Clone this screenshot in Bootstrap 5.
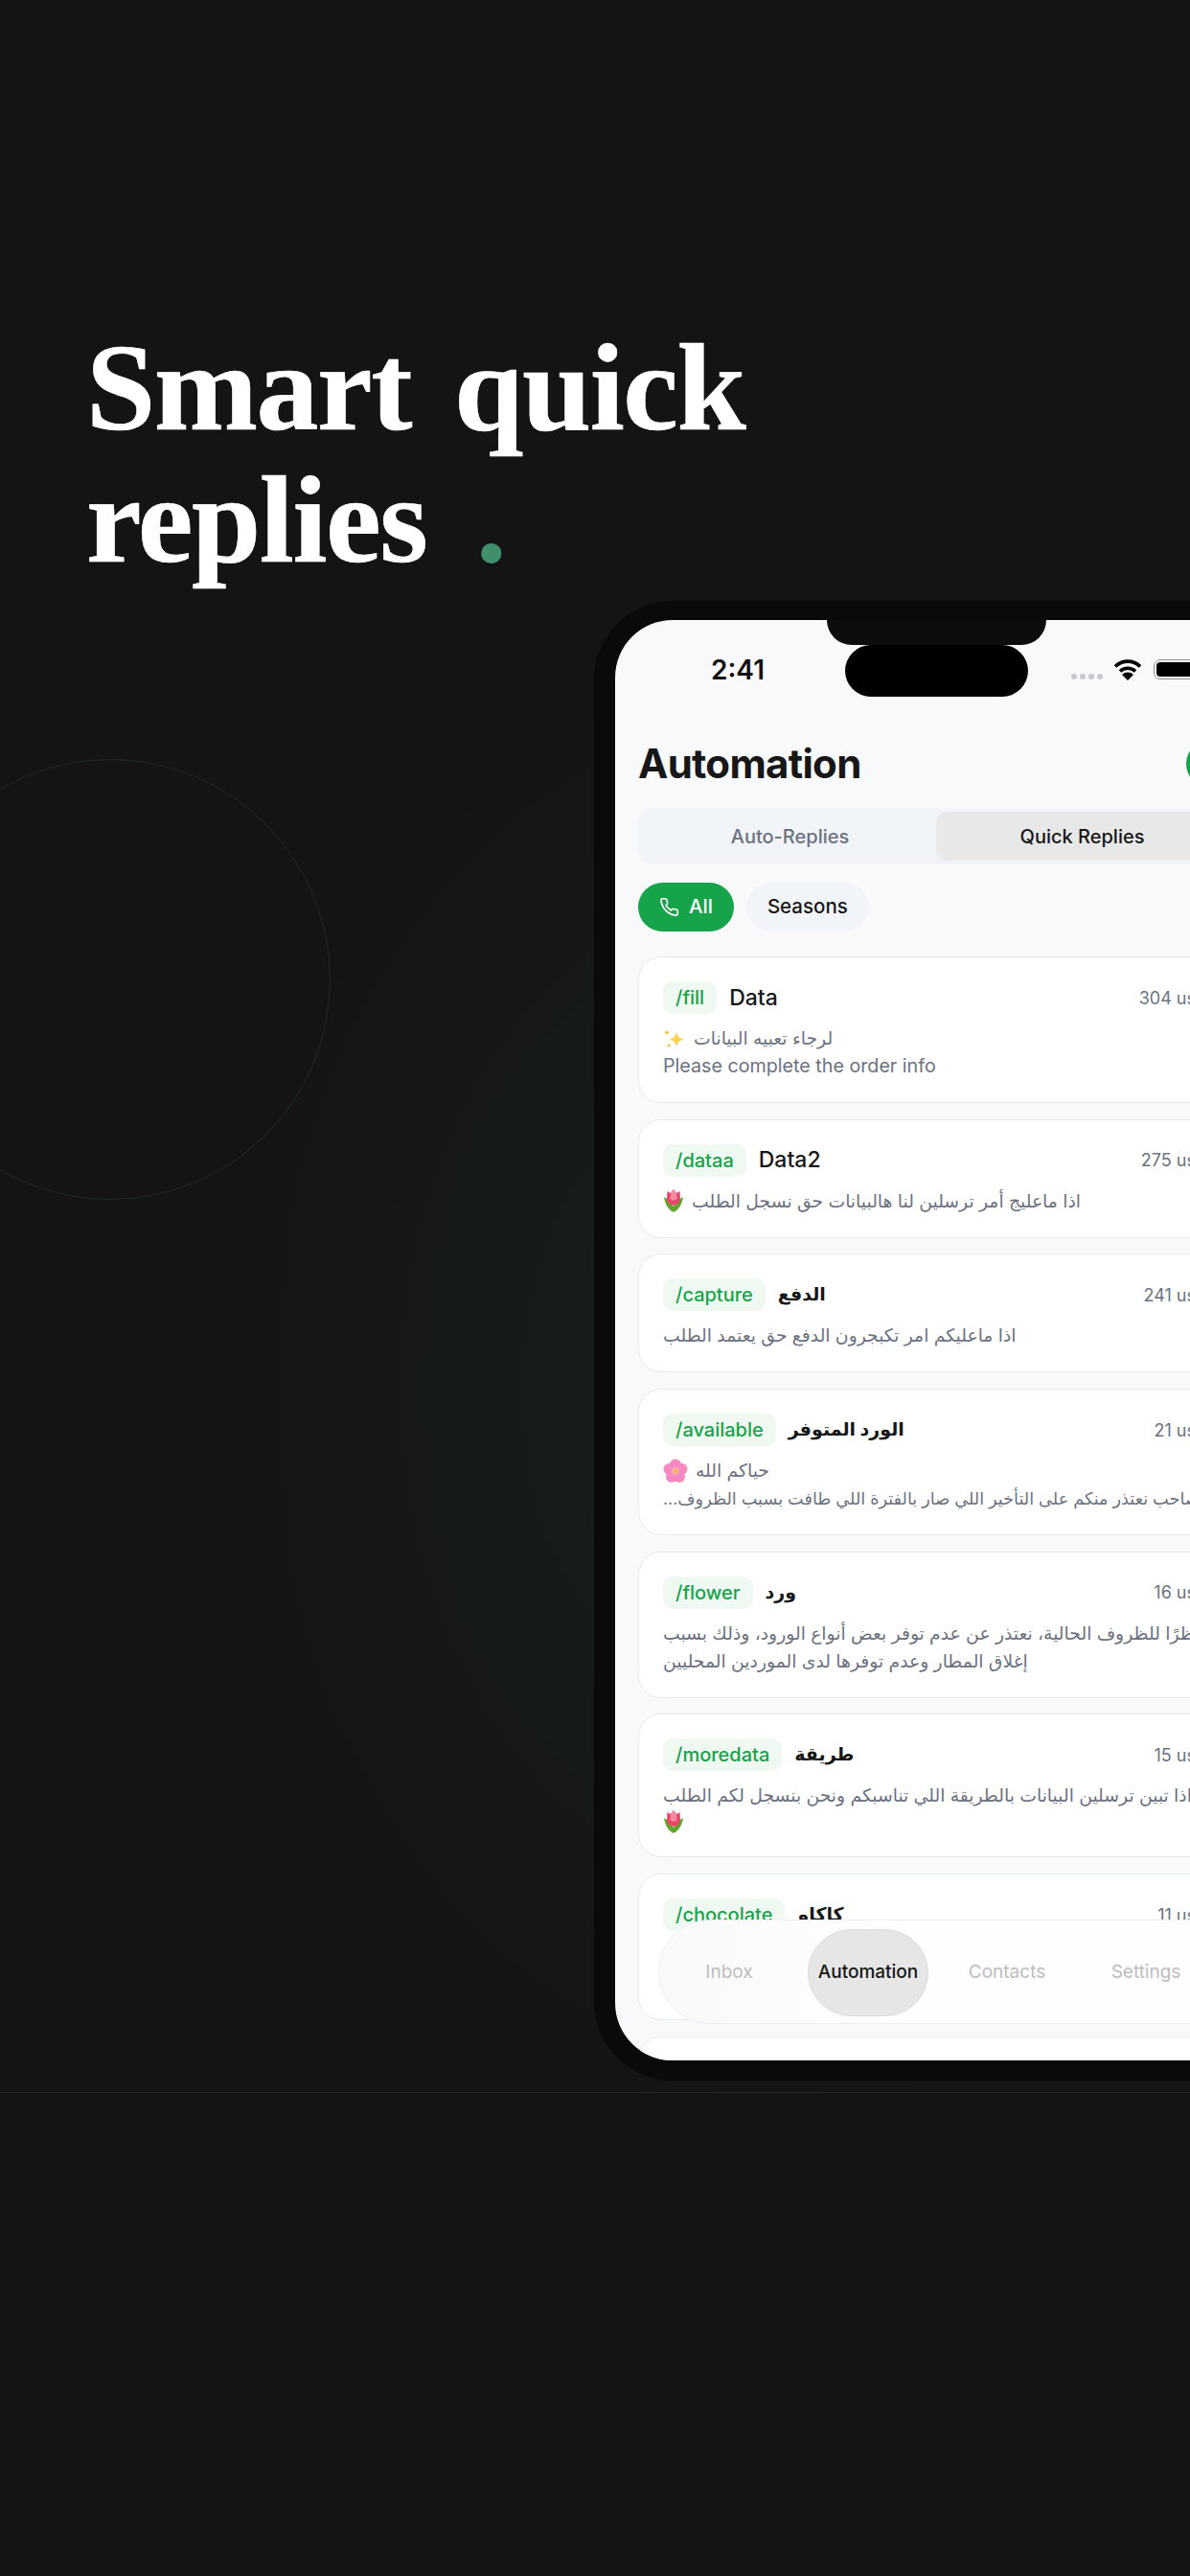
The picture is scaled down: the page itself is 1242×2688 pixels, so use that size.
<!DOCTYPE html>
<html lang="en">
<head>
<meta charset="UTF-8">
<title>Smart quick replies</title>
<link href="https://cdn.jsdelivr.net/npm/bootstrap@5.3.0/dist/css/bootstrap.min.css" rel="stylesheet">
<style>
    html, body { height: 2688px; }
    body {
        overflow: hidden;
        position: relative;
        font-family: "Inter", "DejaVu Sans", sans-serif;
        background-color: #141414;
        background-image: radial-gradient(ellipse 560px 760px at 800px 1450px, rgba(32, 72, 52, .27), rgba(32, 72, 52, 0));
    }
    .ring {
        position: absolute;
        left: -115px; top: 792px;
        width: 460px; height: 460px;
        border: 1.5px solid #1e2a26;
        border-radius: 50%;
    }
    .hero-title {
        margin: 0;
        padding: 335px 0 0 90px;
        font-family: "Liberation Serif", serif;
        font-weight: 700;
        font-size: 130px;
        line-height: 138px;
        letter-spacing: -1.5px;
        word-spacing: 14px;
        color: #fff;
        -webkit-text-stroke: .6px #fff;
    }
    .hero-dot { margin-left: 6px; color: #3f8f6b; -webkit-text-stroke: 0; }
    .phone {
        position: relative;
        margin: 16px 0 0 620px;
        width: 715px;
        height: 1544px;
        padding: 20px 22px 21px;
        background: #0a0a0a;
        border-radius: 82px;
    }
    .notch {
        position: absolute;
        left: 243px; top: 20px;
        width: 229px; height: 26px;
        background: #0d0d0d;
        border-radius: 0 0 26px 26px;
    }
    .island {
        position: absolute;
        left: 262px; top: 46px;
        width: 191px; height: 54px;
        background: #000;
        border-radius: 27px;
    }
    .screen {
        position: relative;
        height: 100%;
        overflow: hidden;
        padding: 36px 25px 0 24px;
        background: #f8f9fb;
        border-radius: 60px;
    }
    .status-row { height: 32px; }
    .clock {
        margin-left: 76px;
        font-size: 28px;
        line-height: 32px;
        font-weight: 600;
        color: #111;
    }
    .status-icons { position: absolute; left: 476px; top: 40px; }
    .sig-dot { width: 6px; height: 6px; margin-right: 3px; background: #c9cacd; border-radius: 50%; }
    .battery {
        width: 70px; height: 21px;
        padding: 2px;
        margin-left: 12px;
        border: 1.5px solid #8e8e8e;
        border-radius: 7px;
    }
    .battery-fill { height: 100%; background: #000; border-radius: 4px; }
    .head-row { height: 50px; margin-top: 57px; }
    .head-title { margin: 0; font-size: 42px; line-height: 50px; font-weight: 700; color: #171717; letter-spacing: -.7px; }
    .head-btn { width: 50px; height: 50px; background: #16a34a; border-radius: 50%; }
    .segment {
        height: 59px;
        margin-top: 21px;
        padding: 4px 6px;
        background: #f1f4f8;
        border-radius: 16px;
    }
    .seg-item {
        flex: 1;
        font-size: 20px;
        font-weight: 500;
        color: #6b7280;
        border-radius: 12px;
    }
    .seg-item.on { background: #e8e8e8; color: #171717; }
    .chips { margin-top: 19px; gap: 13px; }
    .chip {
        height: 51px;
        padding: 0 22px;
        font-size: 20.5px;
        font-weight: 500;
        color: #171717;
        background: #f1f4f8;
        border-radius: 26px;
    }
    .chip.on { gap: 10px; color: #fff; background: #16a34a; }
    .reply-list { margin-top: 26px; gap: 16.7px; }
    .reply-card {
        --bs-card-border-color: #e8eaee;
        --bs-card-border-radius: 24px;
        --bs-card-inner-border-radius: 23px;
        flex: none;
        padding: 25px 19px 23px 25px;
    }
    .reply-top { height: 34px; margin-bottom: 11px; }
    .reply-tag {
        height: 34px;
        padding: 0 13px;
        margin-right: 13px;
        font-size: 20px;
        font-weight: 500;
        line-height: 34px;
        color: #16a34a;
        background: #f0f8f2;
        border-radius: 10px;
    }
    .reply-name { font-size: 23px; font-weight: 500; color: #171717; }
    .reply-name[dir] { font-size: 19px; font-weight: 700; }
    .reply-uses { margin-left: auto; font-size: 18px; color: #6b7280; }
    .reply-text {
        font-size: 19.7px;
        line-height: 29px;
        color: #6b7280;
    }
    .ar { font-size: 18.8px; }
    .ar-line { display: block; direction: rtl; text-align: left; }
    .ar-clip { font-size: 17.7px; white-space: nowrap; margin-right: -16px; }
    .emoji { flex: none; }
    .bottom-nav {
        position: absolute;
        left: 45px; top: 1356px;
        width: 640px; height: 109px;
        padding: 2px 10px 0;
        gap: 19px;
        background: linear-gradient(100deg, #f8f9f8, #fefefe 40%);
        border: 1.5px solid #eeeff1;
        border-radius: 55px;
    }
    .nav-cell {
        flex: none;
        width: 126px; height: 91px;
        font-size: 19px;
        color: #bdbdbd;
        border-radius: 46px;
    }
    .nav-cell.on { font-weight: 500; color: #171717; background: #e6e6e6; border: 1px solid #dcdcdc; }
    .foot-line { height: 1px; margin-top: 12px; background: #262626; }
</style>
</head>
<body>
    <div class="ring"></div>

    <h1 class="hero-title">Smart quick<br>replies <span class="hero-dot">.</span></h1>

    <div class="phone">
        <div class="screen">
            <div class="status-row"><div class="clock">2:41</div></div>

            <div class="head-row d-flex justify-content-between align-items-center">
                <h2 class="head-title">Automation</h2>
                <div class="head-btn"></div>
            </div>

            <div class="segment d-flex">
                <div class="seg-item d-flex align-items-center justify-content-center">Auto-Replies</div>
                <div class="seg-item on d-flex align-items-center justify-content-center">Quick Replies</div>
            </div>

            <div class="chips d-flex">
                <div class="chip on d-flex align-items-center">
                    <svg width="21" height="21" viewBox="0 0 24 24" fill="none" stroke="#fff" stroke-width="1.9" stroke-linecap="round" stroke-linejoin="round"><path d="M22 16.9v3a2 2 0 0 1-2.2 2 19.8 19.8 0 0 1-8.6-3.1 19.5 19.5 0 0 1-6-6A19.8 19.8 0 0 1 2.1 4.2 2 2 0 0 1 4.1 2h3a2 2 0 0 1 2 1.7c.1 1 .4 1.9.7 2.8a2 2 0 0 1-.5 2.1L8.1 9.9a16 16 0 0 0 6 6l1.3-1.3a2 2 0 0 1 2.1-.4c.9.3 1.8.6 2.8.7a2 2 0 0 1 1.7 2z"/></svg>
                    All
                </div>
                <div class="chip d-flex align-items-center">Seasons</div>
            </div>

            <div class="reply-list d-flex flex-column">
                <div class="card reply-card">
                    <div class="reply-top d-flex align-items-center">
                        <span class="reply-tag">/fill</span><span class="reply-name">Data</span><span class="reply-uses">304 uses</span>
                    </div>
                    <div class="reply-text">
                        <div class="d-flex align-items-center gap-2">
                            <svg class="emoji" width="24" height="24" viewBox="0 0 24 24" fill="#fcd34d"><path d="M14 4c1 6 3 7.500 8 8.500-5 1-7 3-8 8.500-1-5.500-3-7.500-8-8.500 5-1 7-2.500 8-8.500z"/><path fill="#f5b83d" d="M4 2c.4 2.300 1 3 3 3.500-2 .5-2.600 1.200-3 3.500-.4-2.300-1-3-3-3.500 2-.5 2.600-1.200 3-3.500zM6 16c.3 1.800.8 2.400 2.400 2.800-1.600.4-2.100 1-2.400 2.800-.3-1.800-.8-2.400-2.400-2.800 1.600-.4 2.100-1 2.400-2.800z"/></svg>
                            <span class="ar" dir="rtl">لرجاء تعبيه البيانات</span>
                        </div>
                        <div>Please complete the order info</div>
                    </div>
                </div>

                <div class="card reply-card">
                    <div class="reply-top d-flex align-items-center">
                        <span class="reply-tag">/dataa</span><span class="reply-name">Data2</span><span class="reply-uses">275 uses</span>
                    </div>
                    <div class="reply-text d-flex align-items-center gap-2">
                        <svg class="emoji" width="22" height="26" viewBox="0 0 22 26"><path fill="#5fa52e" d="M11 25C5 22 2 16 1 9c4 2 7 5 10 10 3-5 6-8 10-10-1 7-4 13-10 16z"/><path fill="#e8476a" d="M4.500 3l3.300 2L11 1l3.200 4 3.300-2 .5 8c0 4-3 6.500-7 6.500S4 15 4 11z"/><path fill="#f58aa0" d="M8 5l3-4 3 4 .5 6c-1 2-6 2-7 0z"/></svg>
                        <span class="ar" dir="rtl">اذا ماعليج أمر ترسلين لنا هالبيانات حق نسجل الطلب</span>
                    </div>
                </div>

                <div class="card reply-card">
                    <div class="reply-top d-flex align-items-center">
                        <span class="reply-tag">/capture</span><span class="reply-name" dir="rtl">الدفع</span><span class="reply-uses">241 uses</span>
                    </div>
                    <div class="reply-text"><span class="ar ar-line">اذا ماعليكم امر تكبجرون الدفع حق يعتمد الطلب</span></div>
                </div>

                <div class="card reply-card">
                    <div class="reply-top d-flex align-items-center">
                        <span class="reply-tag">/available</span><span class="reply-name" dir="rtl">الورد المتوفر</span><span class="reply-uses">21 uses</span>
                    </div>
                    <div class="reply-text">
                        <div class="d-flex align-items-center gap-2">
                            <svg class="emoji" width="26" height="26" viewBox="0 0 26 26"><g fill="#f58ac0"><circle cx="13" cy="6.500" r="6"/><circle cx="19.500" cy="11" r="6"/><circle cx="17" cy="19" r="6"/><circle cx="9" cy="19" r="6"/><circle cx="6.500" cy="11" r="6"/></g><circle cx="13" cy="13" r="4" fill="#f7a8d0"/><circle cx="13" cy="13" r="2.500" fill="#f2b93b"/></svg>
                            <span class="ar" dir="rtl">حياكم الله</span>
                        </div>
                        <div class="ar ar-line ar-clip">صاحب نعتذر منكم على التأخير اللي صار بالفترة اللي طافت بسبب الظروف...</div>
                    </div>
                </div>

                <div class="card reply-card">
                    <div class="reply-top d-flex align-items-center">
                        <span class="reply-tag">/flower</span><span class="reply-name" dir="rtl">ورد</span><span class="reply-uses">16 uses</span>
                    </div>
                    <div class="reply-text"><span class="ar ar-line">نظرًا للظروف الحالية، نعتذر عن عدم توفر بعض أنواع الورود، وذلك بسبب إغلاق المطار وعدم توفرها لدى الموردين المحليين</span></div>
                </div>

                <div class="card reply-card">
                    <div class="reply-top d-flex align-items-center">
                        <span class="reply-tag">/moredata</span><span class="reply-name" dir="rtl">طريقة</span><span class="reply-uses">15 uses</span>
                    </div>
                    <div class="reply-text">
                        <div class="ar ar-line">اذا تبين ترسلين البيانات بالطريقة اللي تناسبكم ونحن بنسجل لكم الطلب</div>
                        <svg class="emoji d-block" width="22" height="26" viewBox="0 0 22 26"><path fill="#5fa52e" d="M11 25C5 22 2 16 1 9c4 2 7 5 10 10 3-5 6-8 10-10-1 7-4 13-10 16z"/><path fill="#e8476a" d="M4.500 3l3.300 2L11 1l3.200 4 3.300-2 .5 8c0 4-3 6.500-7 6.500S4 15 4 11z"/><path fill="#f58aa0" d="M8 5l3-4 3 4 .5 6c-1 2-6 2-7 0z"/></svg>
                    </div>
                </div>

                <div class="card reply-card">
                    <div class="reply-top d-flex align-items-center">
                        <span class="reply-tag">/chocolate</span><span class="reply-name" dir="rtl">كاكاو</span><span class="reply-uses">11 uses</span>
                    </div>
                    <div class="reply-text"><span class="ar ar-line">حياكم الله، الكاكاو متوفر عندنا بكل الأنواع والأحجام حسب الطلب، وتقدرون تختارون اللي يناسبكم</span></div>
                </div>

                <div class="card reply-card">
                    <div class="reply-top d-flex align-items-center">
                        <span class="reply-tag">/thanks</span><span class="reply-uses">9 uses</span>
                    </div>
                </div>
            </div>

            <div class="bottom-nav d-flex align-items-center">
                <div class="nav-cell d-flex align-items-center justify-content-center">Inbox</div>
                <div class="nav-cell on d-flex align-items-center justify-content-center">Automation</div>
                <div class="nav-cell d-flex align-items-center justify-content-center">Contacts</div>
                <div class="nav-cell d-flex align-items-center justify-content-center">Settings</div>
            </div>

            <div class="status-icons d-flex align-items-center">
                <span class="sig-dot" style="margin-top:14px"></span>
                <span class="sig-dot" style="margin-top:14px"></span>
                <span class="sig-dot" style="margin-top:14px"></span>
                <span class="sig-dot" style="margin-top:14px"></span>
                <svg class="ms-2" width="30" height="23" viewBox="0 0 30 23" fill="none" stroke="#000" stroke-width="3.600"><path d="M2 8.500a18.500 18.500 0 0 1 26 0"/><path d="M7 13.500a11.500 11.500 0 0 1 16 0"/><path fill="#000" stroke="none" d="M15 23l-6-6a8.500 8.500 0 0 1 12 0z"/></svg>
                <div class="battery"><div class="battery-fill"></div></div>
            </div>
        </div>
        <div class="notch"></div>
        <div class="island"></div>
    </div>

    <div class="foot-line"></div>
    <script src="https://cdn.jsdelivr.net/npm/bootstrap@5.3.0/dist/js/bootstrap.bundle.min.js"></script>
</body>
</html>
